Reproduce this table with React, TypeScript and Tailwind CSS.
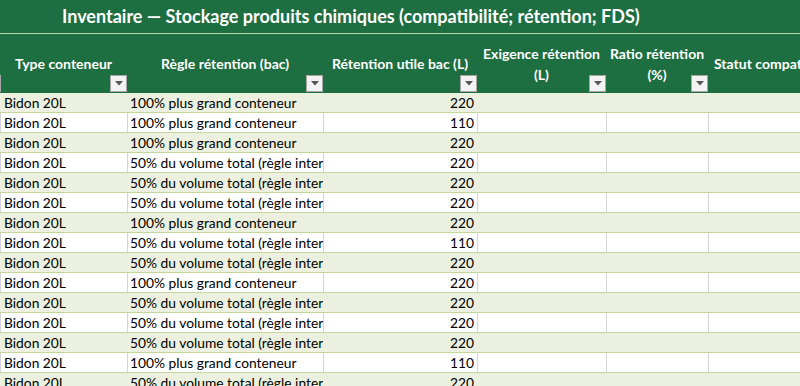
import React from 'react';

const rule100 = '100% plus grand conteneur';
const rule50 = '50% du volume total (règle interne)';

const rows: { rule: string; vol: number }[] = [
  { rule: rule100, vol: 220 },
  { rule: rule100, vol: 110 },
  { rule: rule100, vol: 220 },
  { rule: rule50, vol: 220 },
  { rule: rule50, vol: 220 },
  { rule: rule50, vol: 220 },
  { rule: rule100, vol: 220 },
  { rule: rule50, vol: 110 },
  { rule: rule50, vol: 220 },
  { rule: rule100, vol: 220 },
  { rule: rule50, vol: 220 },
  { rule: rule50, vol: 220 },
  { rule: rule50, vol: 220 },
  { rule: rule100, vol: 110 },
  { rule: rule50, vol: 220 },
];

const FilterButton = () => (
  <span className="absolute right-0 bottom-[1px] flex h-[17px] w-[17px] items-center justify-center border border-[#a6a6a6] bg-[#f3f3f3]">
    <svg width="8" height="5" viewBox="0 0 8 5">
      <path d="M0 0h8L4 4.5z" fill="#555" />
    </svg>
  </span>
);

const HeadCell = ({ w, children }: { w: string; children: React.ReactNode }) => (
  <div className={`relative flex shrink-0 items-center justify-center text-center ${w}`}>
    <div className="leading-[21px]">{children}</div>
    <FilterButton />
  </div>
);

export default function App() {
  return (
    <div className="h-[386px] w-[800px] overflow-hidden bg-white font-['Lato','Open_Sans',sans-serif] text-[13.8px] text-black">
      <div className="flex h-[33px] items-center bg-[#1d6e41] pl-[62px] text-[18px] font-bold text-white">
        Inventaire — Stockage produits chimiques (compatibilité; rétention; FDS)
      </div>
      <div className="h-px bg-[#b7d7a8]" />
      <div className="flex h-[59px] whitespace-nowrap bg-[#1d6e41] text-[14px] font-bold text-white">
        <div className="relative w-0 shrink-0">
          <span className="absolute bottom-[1px] left-[-16px] h-[17px] w-[17px] border border-[#a6a6a6] bg-[#f3f3f3]" />
        </div>
        <HeadCell w="w-[127px]">Type conteneur</HeadCell>
        <HeadCell w="w-[196px]">Règle rétention (bac)</HeadCell>
        <HeadCell w="w-[154px]">Rétention utile bac (L)</HeadCell>
        <HeadCell w="w-[129px]">
          Exigence rétention
          <br />
          (L)
        </HeadCell>
        <HeadCell w="w-[102px]">
          Ratio rétention
          <br />
          (%)
        </HeadCell>
        <div className="flex min-w-0 flex-1 items-center overflow-hidden pl-[6px]">Statut compatibilité</div>
      </div>
      {rows.map((r, i) => {
        const band = i % 2 === 0;
        const line = band ? 'border-l-[#ebf1de]' : 'border-l-[#d4d4d4]';
        return (
          <div
            key={i}
            className={`flex h-[20px] items-center whitespace-nowrap border-b border-[#c4d79b] leading-[19px] ${band ? 'bg-[#ebf1de]' : 'bg-white'}`}
          >
            <div className={`w-[127px] shrink-0 overflow-hidden border-l pl-[3px] ${line}`}>Bidon 20L</div>
            <div className={`w-[196px] shrink-0 overflow-hidden border-l pl-[2px] ${line}`}>{r.rule}</div>
            <div className={`w-[154px] shrink-0 overflow-hidden border-l pr-[3px] text-right ${line}`}>{r.vol}</div>
            <div className={`w-[129px] shrink-0 self-stretch border-l ${line}`} />
            <div className={`w-[102px] shrink-0 self-stretch border-l ${line}`} />
            <div className={`flex-1 self-stretch border-l ${line}`} />
          </div>
        );
      })}
    </div>
  );
}
